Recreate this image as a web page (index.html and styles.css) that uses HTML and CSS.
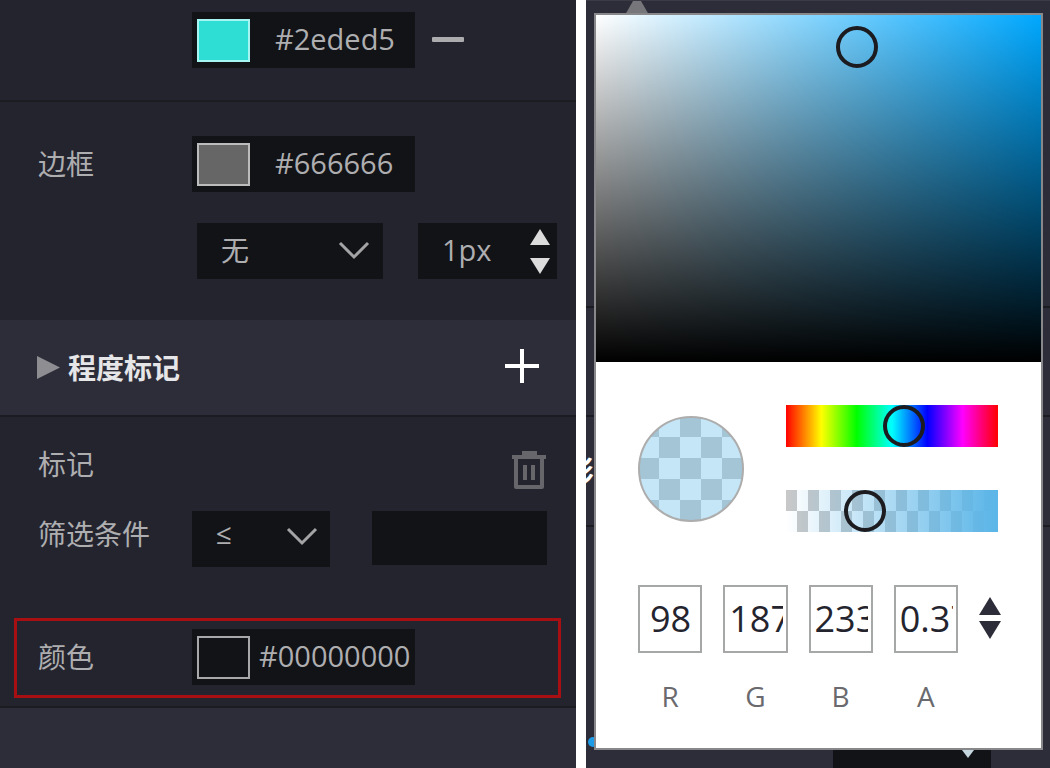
FILE: index.html
```html
<!DOCTYPE html>
<html lang="zh-CN">
<head>
  <meta charset="UTF-8" />
  <meta name="viewport" content="width=device-width, initial-scale=1.0"/>
  <title>程度标记</title>
  <link rel="stylesheet" href="styles.css">
</head>
<body>
  <div class="layout">

    <!-- Settings panel -->
    <main class="panel">
      <section class="group group-fill">
        <div class="row">
          <span></span>
          <div class="color-field">
            <button class="swatch swatch-cyan" aria-label="填充颜色"></button>
            <input type="text" value="#2eded5" aria-label="填充颜色值">
          </div>
          <button class="icon-btn minus" aria-label="删除颜色">
            <svg width="32" height="6" viewBox="0 0 32 6"><rect width="32" height="5" rx="1" fill="#acacae"/></svg>
          </button>
        </div>
      </section>

      <section class="group group-border">
        <div class="row">
          <label for="borderColor">边框</label>
          <div class="color-field">
            <button class="swatch swatch-gray" aria-label="边框颜色"></button>
            <input type="text" id="borderColor" value="#666666">
          </div>
        </div>
        <div class="row">
          <span></span>
          <div class="border-options">
            <div class="select-box">
              <select aria-label="边框样式">
                <option>无</option>
                <option>实线</option>
              </select>
              <svg class="chevron" width="32" height="20" viewBox="0 0 32 20"><path d="M2 2 L16 16 L30 2" fill="none" stroke="#a4a4a6" stroke-width="3"/></svg>
            </div>
            <div class="number-box">
              <input type="text" value="1px" aria-label="边框宽度">
              <div class="spin">
                <button class="icon-btn" aria-label="增加"><svg width="20" height="16" viewBox="0 0 20 16"><path d="M10 0 L20 16 H0 Z" fill="#dcdcdd"/></svg></button>
                <button class="icon-btn" aria-label="减少"><svg width="20" height="16" viewBox="0 0 20 16"><path d="M0 0 H20 L10 16 Z" fill="#dcdcdd"/></svg></button>
              </div>
            </div>
          </div>
        </div>
      </section>

      <header class="group-header">
        <svg width="23" height="23" viewBox="0 0 23 23"><path d="M0 0 L23 11.5 L0 23 Z" fill="#8e8e92"/></svg>
        <h2>程度标记</h2>
        <button class="icon-btn" aria-label="添加标记">
          <svg width="34" height="38" viewBox="0 0 34 38"><path d="M17 0 V34 M0 17 H34" stroke="#fff" stroke-width="4"/></svg>
        </button>
      </header>

      <section class="group group-mark">
        <div class="mark-title">
          <span>标记</span>
          <button class="icon-btn" aria-label="删除标记">
            <svg width="34" height="40" viewBox="0 0 34 40" fill="none" stroke="#66666b" stroke-width="4">
              <path d="M10 3 H25"/>
              <path d="M0 7 H34"/>
              <path d="M4 8 V37 H30 V8" stroke-linejoin="round"/>
              <path d="M13 15 V30 M21 15 V30"/>
            </svg>
          </button>
        </div>

        <div class="row row-filter">
          <label for="operator">筛选条件</label>
          <div class="select-box select-operator">
            <select id="operator">
              <option>≤</option>
              <option>≥</option>
            </select>
            <svg class="chevron" width="32" height="20" viewBox="0 0 32 20"><path d="M2 2 L16 16 L30 2" fill="none" stroke="#a4a4a6" stroke-width="3"/></svg>
          </div>
          <input class="value-input" type="text" aria-label="条件值">
        </div>

        <div class="row row-highlight">
          <label for="markColor">颜色</label>
          <div class="color-field color-field-tight">
            <button class="swatch" aria-label="标记颜色"></button>
            <input type="text" id="markColor" value="#00000000">
          </div>
        </div>
      </section>
    </main>

    <!-- Color picker over the second panel -->
    <aside class="backdrop">
      <div class="strip strip-top">
        <svg width="24" height="14" viewBox="0 0 24 14"><path d="M8 0 H16 L24 14 H0 Z" fill="#77777b"/></svg>
      </div>
      <div class="strip strip-short"></div>
      <div class="strip strip-title"><b>影</b></div>
      <div class="strip strip-last">
        <i class="dot"></i>
        <div class="stub"><svg width="12" height="8" viewBox="0 0 12 8"><path d="M0 0 H12 L6 8 Z" fill="#c4d6de"/></svg></div>
      </div>

      <div class="picker">
        <div class="saturation">
          <span class="ring" style="left: 58.6%; top: 9.3%"></span>
        </div>
        <div class="picker-body">
          <div class="picker-sliders">
            <div class="preview"></div>
            <div class="sliders">
              <input class="hue" type="range" min="0" max="100" value="57" aria-label="色相">
              <input class="alpha" type="range" min="0" max="100" value="34" aria-label="透明度">
            </div>
          </div>
          <div class="picker-inputs">
            <div class="channel">
              <input type="text" id="r" value="98">
              <label for="r">R</label>
            </div>
            <div class="channel">
              <input type="text" id="g" value="187">
              <label for="g">G</label>
            </div>
            <div class="channel">
              <input type="text" id="b" value="233">
              <label for="b">B</label>
            </div>
            <div class="channel">
              <input type="text" id="a" value="0.37">
              <label for="a">A</label>
            </div>
            <div class="mode">
              <button class="icon-btn" aria-label="上一个模式"><svg width="22" height="18" viewBox="0 0 22 18"><path d="M11 0 L22 18 H0 Z" fill="#2d2d39"/></svg></button>
              <button class="icon-btn" aria-label="下一个模式"><svg width="22" height="18" viewBox="0 0 22 18"><path d="M0 0 H22 L11 18 Z" fill="#2d2d39"/></svg></button>
            </div>
          </div>
        </div>
      </div>
    </aside>

  </div>
</body>
</html>
```
FILE: styles.css
```css
* {
  box-sizing: border-box;
  margin: 0;
  padding: 0;
}

body {
  background: #fff;
  color: #aeaeb0;
  font-family: "Open Sans", "Noto Sans CJK SC", sans-serif;
  font-size: 28px;
  line-height: 28px;
}

input,
select,
button {
  font: inherit;
  color: inherit;
  border: none;
  border-radius: 0;
  outline: none;
  background: none;
}

input {
  min-width: 0;
  font-size: 29px;
}

svg {
  display: block;
}

.layout {
  display: grid;
  grid-template-columns: minmax(0, 576fr) minmax(0, 464fr);
  gap: 10px;
  min-height: 100vh;
}

.icon-btn {
  cursor: pointer;
}

/* Settings panel */
.panel {
  background: #2d2d39;
}

.group {
  background: #24242e;
}

.group-fill {
  padding: 12px 19px 32px 38px;
  border-bottom: 2px solid #1b1b22;
}

.group-border {
  display: grid;
  gap: 31px;
  padding: 34px 19px 41px 38px;
}

.group-mark {
  padding: 33px 15px 8px 14px;
  border-bottom: 2px solid #1b1b22;
}

.row {
  display: grid;
  grid-template-columns: 154px auto minmax(0, 1fr);
  align-items: center;
}

.color-field {
  display: flex;
  align-items: center;
  gap: 25px;
  width: 223px;
  height: 56px;
  padding-left: 5px;
  background: #121317;
}

.color-field-tight {
  gap: 9px;
}

.color-field input {
  flex: 1;
  padding-bottom: 3px;
}

.swatch {
  width: 53px;
  height: 43px;
  border: 2px solid #a8a8aa;
  cursor: pointer;
}

.swatch-cyan {
  background: #2eded5;
  border-color: #a6f5f3;
}

.swatch-gray {
  background: #666;
  border-color: #bcbcbc;
}

.minus {
  justify-self: start;
  margin-left: 17px;
}

.border-options {
  display: flex;
  grid-column: 2 / 4;
  justify-content: space-between;
  gap: 35px;
  padding-left: 5px;
}

.select-box {
  display: grid;
  flex: 1;
  height: 56px;
  background: #121317;
}

.select-box select,
.select-box .chevron {
  grid-area: 1 / 1;
}

.select-box select {
  appearance: none;
  width: 100%;
  padding: 0 50px 2px 24px;
}

.select-box .chevron {
  justify-self: end;
  margin: 18px 13px 0 0;
  pointer-events: none;
}

.number-box {
  display: flex;
  align-items: center;
  justify-content: space-between;
  width: 139px;
  height: 56px;
  padding: 0 7px 0 24px;
  background: #121317;
}

.number-box input {
  width: 60px;
  padding-bottom: 3px;
}

.spin {
  display: grid;
  gap: 13px;
}

.group-header {
  display: flex;
  align-items: center;
  gap: 8px;
  height: 97px;
  padding: 0 37px;
  border-bottom: 2px solid #1b1b22;
}

.group-header h2 {
  flex: 1;
  color: #e6e6e8;
  font-size: 28px;
}

.mark-title {
  display: flex;
  justify-content: space-between;
  padding: 0 15px 0 24px;
}

.row-filter {
  align-items: start;
  padding: 21px 14px 51px 24px;
}

.row-filter label {
  line-height: 46px;
}

.select-operator {
  width: 138px;
}

.select-operator select {
  padding-bottom: 12px;
}

.select-operator .chevron {
  margin: 16px 12px 0 0;
}

.value-input {
  justify-self: stretch;
  height: 54px;
  margin-left: 42px;
  padding: 0 12px;
  background: #121317;
}

.row-highlight {
  height: 80px;
  padding: 0 0 2px 21px;
  border: 3px solid #a80f12;
}

/* Panel behind the picker */
.backdrop {
  display: flex;
  flex-direction: column;
  position: relative;
  overflow: hidden;
  background: #2d2d39;
}

.strip {
  border-bottom: 2px solid #1b1b22;
}

.strip-top {
  height: 308px;
  padding-left: 39px;
  border-top: 1px solid #3b3b46;
}

.strip-short {
  height: 109px;
}

.strip-title {
  height: 110px;
  padding-top: 40px;
  color: #fff;
}

.strip-title b {
  margin-left: -20px;
}

.strip-last {
  display: flex;
  flex: 1;
  justify-content: space-between;
  align-items: flex-end;
  padding-right: 59px;
  border-bottom: none;
}

.dot {
  width: 10px;
  height: 10px;
  margin: 0 0 21px 2px;
  border-radius: 50%;
  background: #1e9be6;
}

.stub {
  display: flex;
  justify-content: flex-end;
  width: 158px;
  height: 18px;
  padding-right: 17px;
  background: #121317;
}

/* Color picker */
.picker {
  position: absolute;
  top: 13px;
  left: 8px;
  right: 7px;
  border: 2px solid #88888a;
  background: #fff;
}

.saturation {
  position: relative;
  height: 347px;
  background:
    linear-gradient(to top, #000, transparent),
    linear-gradient(to right, #fff, #00a8ff);
}

.ring {
  position: absolute;
  width: 42px;
  height: 42px;
  margin: -21px 0 0 -21px;
  border: 4px solid #1b1b20;
  border-radius: 50%;
}

.picker-body {
  padding: 43px 43px 34px 42px;
}

.picker-sliders {
  display: flex;
  align-items: center;
  gap: 42px;
}

.preview {
  flex-shrink: 0;
  width: 106px;
  height: 106px;
  border: 2px solid #adadad;
  border-radius: 50%;
  background: conic-gradient(#c5e6f7 25%, #a3c5d6 25% 50%, #c5e6f7 50% 75%, #a3c5d6 75%) 0 0 / 42px 42px border-box;
}

.sliders {
  display: grid;
  flex: 1;
  gap: 43px;
}

.sliders input {
  appearance: none;
  width: 100%;
  height: 42px;
}

.sliders input::-webkit-slider-thumb {
  appearance: none;
  width: 42px;
  height: 42px;
  border: 4px solid #1b1b20;
  border-radius: 50%;
  background: transparent;
}

.sliders .hue {
  background: linear-gradient(to right, #f00, #ff0, #0f0, #0ff, #00f, #f0f, #f00);
}

.sliders .alpha {
  background:
    linear-gradient(to right, transparent, #5cb6e8 98%),
    conic-gradient(#fff 25%, #c8c8c8 25% 50%, #fff 50% 75%, #c8c8c8 75%) 0 0 / 22px 42px;
}

.picker-inputs {
  display: flex;
  gap: 21px;
  margin: 53px -3px 0 0;
}

.channel {
  display: grid;
  flex: 1;
  gap: 25px;
  color: #6a6a6e;
  line-height: 36px;
  text-align: center;
}

.channel input {
  width: 100%;
  height: 68px;
  padding: 0 3px 2px 4px;
  border: 2px solid #a6a8a8;
  color: #24242e;
  font-size: 36px;
  text-align: center;
}

.mode {
  display: grid;
  align-content: center;
  gap: 6px;
  height: 66px;
}
```
